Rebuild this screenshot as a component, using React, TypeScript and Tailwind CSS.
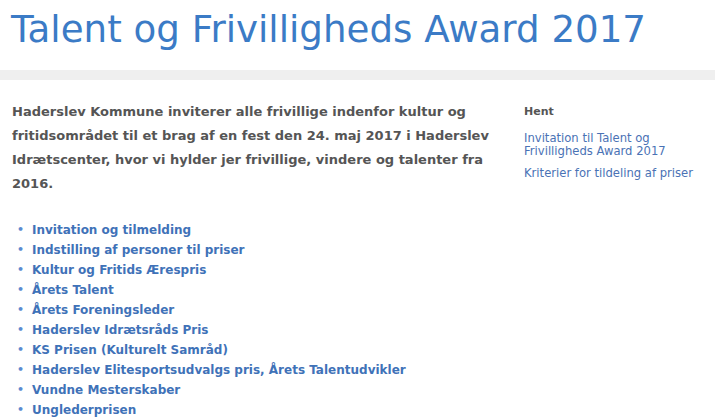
const links = [
  "Invitation og tilmelding",
  "Indstilling af personer til priser",
  "Kultur og Fritids Ærespris",
  "Årets Talent",
  "Årets Foreningsleder",
  "Haderslev Idrætsråds Pris",
  "KS Prisen (Kulturelt Samråd)",
  "Haderslev Elitesportsudvalgs pris, Årets Talentudvikler",
  "Vundne Mesterskaber",
  "Unglederprisen",
];

export default function App() {
  return (
    <div className="min-h-[420px] bg-white font-['DejaVu_Sans',Verdana,sans-serif]">
      <h1 className="h-[70px] pl-[11px] pt-[7px] text-[37.2px] leading-[44px] text-[#3b7bc6]">
        Talent og Frivilligheds Award 2017
      </h1>
      <div className="h-[10px] bg-[#efefef]" />

      <div className="flex pt-[20px]">
        <main className="w-[512px] pl-[12px]">
          <p className="w-[482px] text-[13px] font-bold leading-[24px] text-[#555555]">
            Haderslev Kommune inviterer alle frivillige indenfor kultur og
            fritidsområdet til et brag af en fest den 24. maj 2017 i Haderslev
            Idrætscenter, hvor vi hylder jer frivillige, vindere og talenter fra
            2016.
          </p>

          <ul className="mt-[24px] pl-[20px]">
            {links.map((l) => (
              <li
                key={l}
                className="flex items-center text-[12px] font-bold leading-[20px] text-[#3f72b8]"
              >
                <span className="-ml-[20px] w-[20px] pl-[5px] text-[11px] text-[#5b8bd0]">•</span>
                <a href="#">{l}</a>
              </li>
            ))}
          </ul>
        </main>

        <aside className="pl-[12px] pt-[2px] text-[11.6px] text-[#4a72b5]">
          <h2 className="text-[11px] font-bold leading-[20px] text-[#555555]">Hent</h2>
          <ul className="mt-[10px] space-y-[9px]">
            <li className="leading-[13px]">
              <a href="#">
                Invitation til Talent og
                <br />
                Frivilligheds Award 2017
              </a>
            </li>
            <li className="leading-[13px]">
              <a href="#">Kriterier for tildeling af priser</a>
            </li>
          </ul>
        </aside>
      </div>
    </div>
  );
}
